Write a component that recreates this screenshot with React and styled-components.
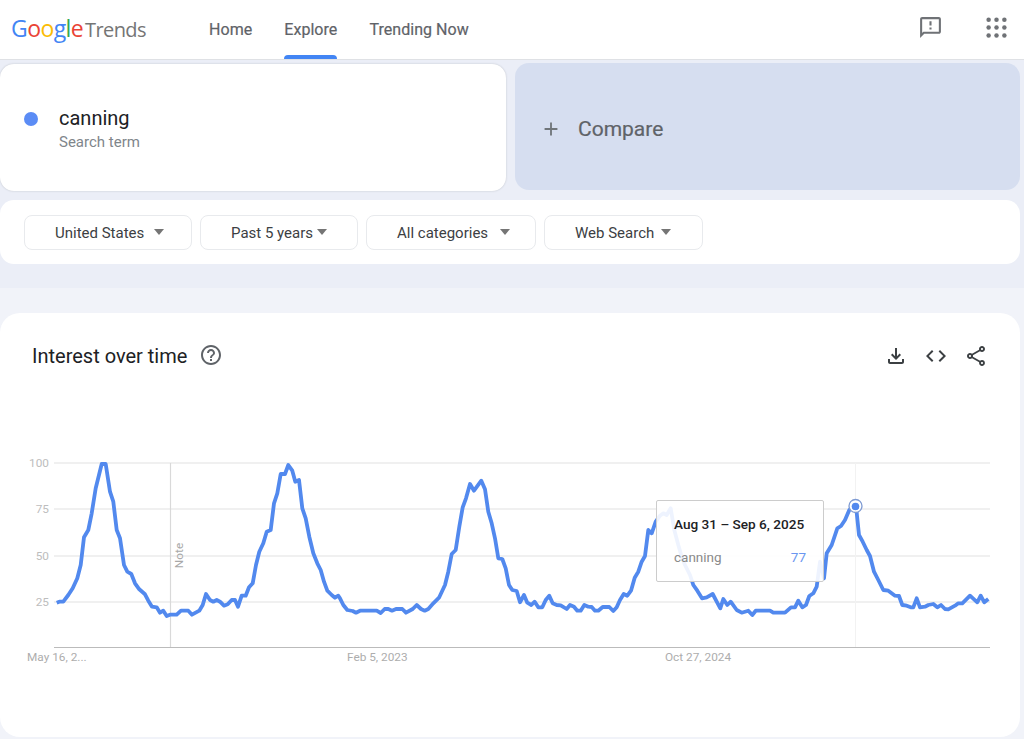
import React from "react";
import styled, { createGlobalStyle } from "styled-components";
import {
  MdAdd,
  MdCode,
  MdHelpOutline,
  MdOutlineFeedback,
  MdOutlineFileDownload,
  MdOutlineShare,
} from "react-icons/md";

const navItems = ["Home", "Explore", "Trending Now"];
const filters = [
  { label: "United States", width: 168, gap: 9.5 },
  { label: "Past 5 years", width: 158, gap: 4 },
  { label: "All categories", width: 170, gap: 11.5 },
  { label: "Web Search", width: 159, gap: 7 },
];
const logoLetters = [
  ["G", "#4285f4"],
  ["o", "#ea4335"],
  ["o", "#fbbc05"],
  ["g", "#4285f4"],
  ["l", "#34a853"],
  ["e", "#ea4335"],
];

const CHART_TOP = 445;

// traced from the reference, [offset x, then x/y pairs at 3x]
const traces = [
  [0, [170,458,178,455,190,455,205,435,218,415,232,385,242,345,252,262,265,240,275,190,287,115,305,42,317,42,330,125,340,155,350,240,360,265,372,345,382,365,394,372,405,400,418,418,435,433,445,452,456,470,470,472,480,488,490,482,500,498,510,494,530,494,543,482,565,482,576,494,598,482,608,465,618,432,630,450,640,455,650,450,660,455,672,467,683,463,695,450,705,450,714,470,725,437,737,437,747,412,758,400,768,345,778,305,790,280,800,245,812,240,822,160,832,130,842,72,855,72,865,45,877,62,886,95,897,90,907,175,917,205,928,260,940,310,952,340,962,360,972,395,982,422,995,435,1005,443,1015,437]],
  [340, [0,445,10,465,22,480,38,483,48,488,60,482,110,482,122,489,134,477,145,477,156,482,168,477,187,477,198,488,218,477,230,465,243,477,254,482,265,477,280,460,297,443,315,405,325,365,335,312,347,300,358,230,368,172,378,145,390,102,402,122,424,92,435,118,445,185,455,220,465,265,475,325,487,327,497,355,507,405,517,420,530,423,540,457,552,435,562,458,574,465,584,455,595,472,607,472,617,450,628,437,638,460,650,465,662,466,680,477,690,465,702,470,712,482,722,482,733,465,745,470,755,471,765,482,775,482,788,471,808,471,820,483,830,472,840,450,851,432,862,437,873,422,884,383,895,365,905,335,915,318,925,240,935,250]],
  [640, [47,215,60,197,70,190,80,195,92,175,103,240,115,285,125,320,135,345,150,375,160,405,172,422,186,445,200,442,218,432,230,455,241,475,250,447,262,465,272,455,290,480,305,488,325,482,337,495,347,482,390,482,400,488,435,488,453,472,465,472,475,452,487,472,498,465,508,438,520,430,530,410,540,335,552,385,560,310,575,285,592,235,603,228,615,210,628,180,648,168,657,255,668,275,680,300,690,318,702,365,715,390,730,420,745,422,765,437,777,438,787,465,800,467,812,472,820,472,830,445,840,472,855,470,865,465,880,462,892,472,903,465,915,477,925,478,945,467,955,460,967,460,990,437,1012,457,1022,437,1033,457,1045,447]],
];

const linePoints = traces
  .flatMap(([offset, coords]) => {
    const out = [];
    for (let i = 0; i < coords.length; i += 2) {
      const x = offset + coords[i] / 3;
      const y = 450 + coords[i + 1] / 3 - CHART_TOP;
      out.push(`${x.toFixed(1)},${y.toFixed(1)}`);
    }
    return out;
  })
  .join(" ");

const gridLines = [
  { label: "100", y: 18 },
  { label: "75", y: 64 },
  { label: "50", y: 111 },
  { label: "25", y: 157 },
];

const axisLabels = [
  { label: "May 16, 2...", x: 27 },
  { label: "Feb 5, 2023", x: 347 },
  { label: "Oct 27, 2024", x: 665 },
];

const appDots = [5, 12, 19].flatMap((cy) => [5, 12, 19].map((cx) => [cx, cy]));

function AppsIcon() {
  return (
    <svg width="27" height="27" viewBox="0 0 24 24" fill="currentColor">
      {appDots.map(([cx, cy]) => (
        <circle key={`${cx}-${cy}`} cx={cx} cy={cy} r="2" />
      ))}
    </svg>
  );
}

export default function App() {
  return (
    <>
      <GlobalStyle />
      <Header>
        <Logo>
          <LogoMark>
            {logoLetters.map(([letter, color], index) => (
              <LogoLetter key={index} $color={color}>
                {letter}
              </LogoLetter>
            ))}
          </LogoMark>
          <LogoProduct>Trends</LogoProduct>
        </Logo>
        <Nav>
          {navItems.map((item) => (
            <NavLink key={item} $active={item === "Explore"}>
              {item}
            </NavLink>
          ))}
        </Nav>
        <HeaderIcons>
          <MdOutlineFeedback size={25} />
          <AppsIcon />
        </HeaderIcons>
      </Header>

      <TopBand>
        <Terms>
          <SearchCard>
            <TermDot />
            <TermText>
              <TermName>canning</TermName>
              <TermHint>Search term</TermHint>
            </TermText>
          </SearchCard>
          <CompareCard>
            <MdAdd size={22} />
            <span>Compare</span>
          </CompareCard>
        </Terms>
        <FilterCard>
          {filters.map((filter) => (
            <FilterPill key={filter.label} $width={filter.width} $gap={filter.gap}>
              {filter.label}
              <Caret />
            </FilterPill>
          ))}
        </FilterCard>
      </TopBand>

      <ChartCard>
        <ChartHeader>
          <ChartTitle>
            Interest over time
            <MdHelpOutline size={24} />
          </ChartTitle>
          <ChartActions>
            <MdOutlineFileDownload size={24} />
            <MdCode size={24} />
            <MdOutlineShare size={24} />
          </ChartActions>
        </ChartHeader>
        <ChartArea>
          <svg width="1020" height="225" viewBox="0 0 1020 225">
            {gridLines.map((line) => (
              <g key={line.label}>
                <line x1="54" x2="990" y1={line.y} y2={line.y} stroke="#ebebeb" strokeWidth="1.4" />
                <text x="49" y={line.y + 4} textAnchor="end" fontSize="11.8" fill="#bdbdbd">
                  {line.label}
                </text>
              </g>
            ))}
            <line x1="54" x2="990" y1="202.5" y2="202.5" stroke="#bbbbbb" strokeWidth="1.2" />
            <line x1="170.5" x2="170.5" y1="18" y2="202" stroke="#d9d9d9" strokeWidth="1.2" />
            <line x1="855.5" x2="855.5" y1="18" y2="202" stroke="#f2f2f2" strokeWidth="1" />
            <text
              x="0"
              y="0"
              fontSize="11.8"
              fill="#a8a8a8"
              textAnchor="middle"
              transform="translate(183 110.5) rotate(-90)"
            >
              Note
            </text>
            {axisLabels.map((item) => (
              <text key={item.label} x={item.x} y="216" fontSize="11.8" fill="#adadad">
                {item.label}
              </text>
            ))}
            <polyline
              points={linePoints}
              fill="none"
              stroke="#5289ee"
              strokeWidth="3.8"
              strokeLinejoin="round"
            />
            <circle cx="855.5" cy="61" r="6.5" fill="#ffffff" stroke="#7f9bd3" strokeWidth="1.3" />
            <circle cx="855.5" cy="61.5" r="3.8" fill="#5289ee" />
          </svg>
          <Tooltip>
            <TooltipDate>Aug 31 – Sep 6, 2025</TooltipDate>
            <TooltipRow>
              <span>canning</span>
              <TooltipValue>77</TooltipValue>
            </TooltipRow>
          </Tooltip>
        </ChartArea>
      </ChartCard>
    </>
  );
}

const GlobalStyle = createGlobalStyle`
  html, body {
    margin: 0;
    background: #f1f3f9;
    font-family: Roboto, "Liberation Sans", sans-serif;
  }
  svg text {
    font-family: Roboto, "Liberation Sans", sans-serif;
  }
`;

const Header = styled.header`
  display: flex;
  align-items: center;
  height: 59px;
  background: #fff;
  border-bottom: 1px solid #dfe1e5;
`;

const Logo = styled.div`
  display: flex;
  align-items: baseline;
  gap: 2px;
  width: 209px;
  margin-top: -3px;
  padding-left: 11px;
  box-sizing: border-box;
  font-family: "Open Sans", sans-serif;
  letter-spacing: -0.6px;
`;

const LogoMark = styled.span`
  font-size: 23px;
  font-weight: 500;
`;

const LogoLetter = styled.span`
  color: ${(p) => p.$color};
`;

const LogoProduct = styled.span`
  font-size: 20px;
  color: #757575;
`;

const Nav = styled.nav`
  display: flex;
  gap: 32px;
  height: 100%;
`;

const NavLink = styled.a`
  position: relative;
  display: flex;
  align-items: center;
  font-size: 16px;
  letter-spacing: 0.05px;
  color: #5f6368;
  -webkit-text-stroke: 0.2px #5f6368;

  ${(p) =>
    p.$active &&
    `
    &::after {
      content: "";
      position: absolute;
      left: 0;
      right: 0;
      bottom: 0;
      height: 4px;
      background: #4285f4;
      border-radius: 4px 4px 0 0;
    }
  `}
`;

const HeaderIcons = styled.div`
  display: flex;
  align-items: center;
  gap: 40px;
  margin-left: auto;
  margin-right: 14px;
  padding-bottom: 4px;
  color: #6f7276;
`;

const TopBand = styled.section`
  height: 225px;
  padding: 3px 4px 0 0;
  background: #ebeef7;
`;

const Terms = styled.div`
  display: flex;
  gap: 9px;
`;

const SearchCard = styled.div`
  display: flex;
  align-items: flex-start;
  gap: 21px;
  flex: 0 0 506px;
  box-sizing: border-box;
  height: 127px;
  margin-top: 1px;
  padding: 42px 0 0 24px;
  background: #fff;
  border-radius: 14px;
  box-shadow: 0 0 2px rgba(60, 64, 67, 0.25);
`;

const TermDot = styled.span`
  width: 14px;
  height: 14px;
  margin-top: 6px;
  border-radius: 50%;
  background: #5b8cf5;
`;

const TermText = styled.div`
  display: flex;
  flex-direction: column;
  gap: 3px;
`;

const TermName = styled.span`
  font-size: 20px;
  line-height: 24px;
  color: #202124;
`;

const TermHint = styled.span`
  font-size: 15px;
  line-height: 18px;
  color: #80868b;
`;

const CompareCard = styled.div`
  display: flex;
  align-items: center;
  gap: 16px;
  flex: 1;
  box-sizing: border-box;
  height: 127px;
  padding: 4px 0 0 25px;
  background: #d6def0;
  border-radius: 14px;
  font-size: 21px;
  color: #5f6368;
  -webkit-text-stroke: 0.2px #5f6368;

  svg {
    color: #70757a;
  }
`;

const FilterCard = styled.div`
  display: flex;
  align-items: center;
  gap: 8px;
  height: 64px;
  margin-top: 9px;
  padding-left: 24px;
  background: #fff;
  border-radius: 14px;
`;

const FilterPill = styled.div`
  display: flex;
  align-items: center;
  gap: ${(p) => p.$gap}px;
  width: ${(p) => p.$width}px;
  height: 35px;
  box-sizing: border-box;
  padding: 2px 0 0 30px;
  border: 1.5px solid #e8eaed;
  border-radius: 8px;
  font-size: 15px;
  color: #3c4043;
`;

const Caret = styled.span`
  width: 0;
  height: 0;
  margin-top: -2px;
  border-left: 5.5px solid transparent;
  border-right: 5.5px solid transparent;
  border-top: 6px solid #757575;
`;

const ChartCard = styled.section`
  box-sizing: border-box;
  width: 1020px;
  height: 424px;
  margin-top: 25px;
  padding-top: 27px;
  background: #fff;
  border-radius: 20px;
`;

const ChartHeader = styled.div`
  display: flex;
  align-items: center;
  justify-content: space-between;
  height: 32px;
  padding: 0 32px;
`;

const ChartTitle = styled.h2`
  display: flex;
  align-items: center;
  gap: 12px;
  margin: 0;
  font-size: 20px;
  font-weight: 400;
  color: #202124;

  svg {
    margin-top: -3px;
    color: #5f6368;
  }
`;

const ChartActions = styled.div`
  display: flex;
  align-items: center;
  gap: 16px;
  color: #3c4043;
`;

const ChartArea = styled.div`
  position: relative;
  margin-top: 73px;
  height: 225px;

  svg {
    display: block;
  }
`;

const Tooltip = styled.div`
  position: absolute;
  left: 656px;
  top: 55px;
  box-sizing: border-box;
  width: 168px;
  height: 82px;
  padding: 14px 17px 0;
  background: rgba(255, 255, 255, 0.9);
  border: 1px solid #cccccc;
  border-radius: 2px;
`;

const TooltipDate = styled.div`
  font-size: 13.6px;
  font-weight: 500;
  line-height: 18px;
  color: #202124;
`;

const TooltipRow = styled.div`
  display: flex;
  justify-content: space-between;
  margin-top: 15px;
  font-size: 13.5px;
  line-height: 18px;
  color: #8a8a8a;
`;

const TooltipValue = styled.span`
  color: #6a96f0;
`;
